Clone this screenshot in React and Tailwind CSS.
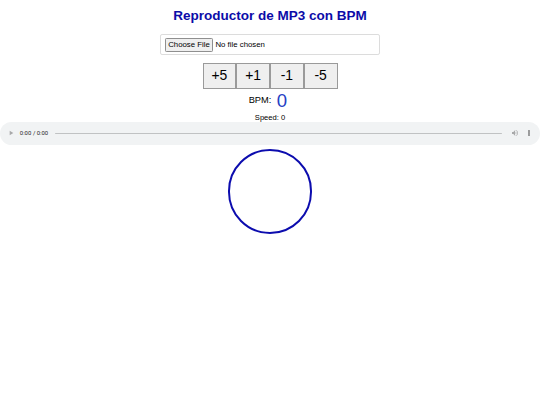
import React, { useState } from 'react';

export default function App() {
  const [bpm, setBpm] = useState(0);
  const steps = [5, 1, -1, -5];

  return (
    <div className="w-[1280px] h-[960px] [zoom:0.421875] bg-white font-['Liberation_Sans',Arial,sans-serif] text-black">
      <div className="flex flex-col items-center">
        <h1 className="mt-[18px] text-[32px] leading-[40px] font-bold text-[#0c0ca8]">
          Reproductor de MP3 con BPM
        </h1>

        <input
          type="file"
          accept="audio/mp3"
          className="mt-[23px] w-[522px] h-[50px] pt-[6px] px-[9px] border-2 border-[#dcdcdc] rounded-[5px] text-[18.5px] file:bg-[#efefef] file:border-2 file:border-[#8f8f8f] file:rounded-[3px] file:px-[6px] file:py-[1px] file:mr-[5px]"
        />

        <div className="mt-[19px] flex">
          {steps.map((s) => (
            <button
              key={s}
              onClick={() => setBpm(bpm + s)}
              className="w-[80px] h-[62px] bg-[#efefef] border-2 border-[#9a9a9a] text-[33px] leading-none"
            >
              {s > 0 ? `+${s}` : s}
            </button>
          ))}
        </div>

        <div className="mt-[4px] pr-[10px] flex items-center">
          <span className="text-[22px] text-black">BPM:</span>
          <span className="ml-[13px] text-[44px] leading-[46px] text-[#2440c4]">{bpm}</span>
        </div>

        <p className="mt-[5px] text-[18px] leading-[22px]">Speed: 0</p>
      </div>

      <audio controls className="mt-[1px] w-full block" />

      <div className="mt-[10px] flex justify-center">
        <div className="w-[200px] h-[200px] rounded-full border-[5px] border-[#0c0cae]" />
      </div>
    </div>
  );
}
